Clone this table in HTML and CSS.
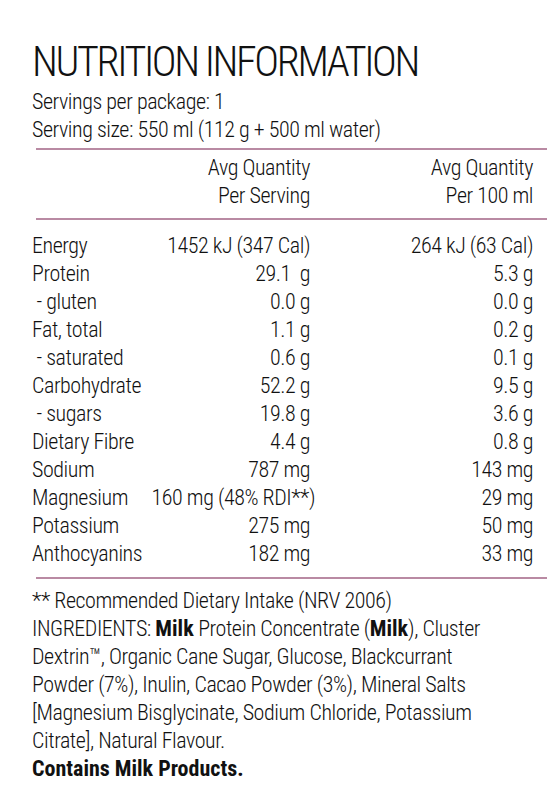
FILE: index.html
```html
<!DOCTYPE html>
<html lang="en">
<head>
    <meta charset="UTF-8">
    <meta name="viewport" content="width=device-width, initial-scale=1.0">
    <title>Nutrition Information</title>
    <link rel="stylesheet" href="styles.css">
</head>
<body>
    <div class="panel">
        <h1>NUTRITION INFORMATION</h1>
        <p class="serving">Servings per package: 1</p>
        <p class="serving">Serving size: 550 ml (112 g + 500 ml water)</p>

        <hr class="rule">

        <div class="row head">
            <span class="label"></span>
            <span class="per-serve">Avg Quantity<br>Per Serving</span>
            <span class="per-100">Avg Quantity<br>Per 100 ml</span>
        </div>

        <hr class="rule">

        <div class="facts">
            <div class="row"><span class="label">Energy</span><span class="per-serve">1452 kJ (347 Cal)</span><span class="per-100">264 kJ (63 Cal)</span></div>
            <div class="row"><span class="label">Protein</span><span class="per-serve">29.1&nbsp; g</span><span class="per-100">5.3 g</span></div>
            <div class="row"><span class="label">&nbsp;- gluten</span><span class="per-serve">0.0 g</span><span class="per-100">0.0 g</span></div>
            <div class="row"><span class="label">Fat, total</span><span class="per-serve">1.1 g</span><span class="per-100">0.2 g</span></div>
            <div class="row"><span class="label">&nbsp;- saturated</span><span class="per-serve">0.6 g</span><span class="per-100">0.1 g</span></div>
            <div class="row"><span class="label">Carbohydrate</span><span class="per-serve">52.2 g</span><span class="per-100">9.5 g</span></div>
            <div class="row"><span class="label">&nbsp;- sugars</span><span class="per-serve">19.8 g</span><span class="per-100">3.6 g</span></div>
            <div class="row"><span class="label">Dietary Fibre</span><span class="per-serve">4.4 g</span><span class="per-100">0.8 g</span></div>
            <div class="row"><span class="label">Sodium</span><span class="per-serve">787 mg</span><span class="per-100">143 mg</span></div>
            <div class="row"><span class="label">Magnesium</span><span class="per-serve overhang">160 mg (48% RDI**)</span><span class="per-100">29 mg</span></div>
            <div class="row"><span class="label">Potassium</span><span class="per-serve">275 mg</span><span class="per-100">50 mg</span></div>
            <div class="row"><span class="label">Anthocyanins</span><span class="per-serve">182 mg</span><span class="per-100">33 mg</span></div>
        </div>

        <hr class="rule">

        <div class="notes">
            <p>** Recommended Dietary Intake (NRV 2006)</p>
            <p>INGREDIENTS: <b>Milk</b> Protein Concentrate (<b>Milk</b>), Cluster<br>
            Dextrin™, Organic Cane Sugar, Glucose, Blackcurrant<br>
            Powder (7%), Inulin, Cacao Powder (3%), Mineral Salts<br>
            [Magnesium Bisglycinate, Sodium Chloride, Potassium<br>
            Citrate], Natural Flavour.</p>
            <p><b>Contains Milk Products.</b></p>
        </div>
    </div>
</body>
</html>
```

FILE: styles.css
```css
body {
    margin: 0;
    background-color: #fff;
    color: #111;
    font-family: Roboto, "Liberation Sans", Arial, sans-serif;
    font-stretch: 75%;
    font-weight: 350;
    font-size: 22px;
    line-height: 28px;
    letter-spacing: -0.45px;
}
.panel {
    padding: 36px 0 0 32px;
    width: 515px;
}
h1 {
    margin: 0;
    font-size: 42px;
    font-weight: 300;
    line-height: 52px;
    letter-spacing: -2.4px;
}
.serving {
    margin: 0;
}
.rule {
    border: none;
    border-top: 2px solid #b98aa3;
    margin: 4px 0 0 4px;
    height: 0;
}
.row {
    display: flex;
    width: 501px;
}
.head {
    margin: 4px 0 8px;
}
.label {
    flex: 1;
    white-space: pre;
}
.per-serve {
    text-align: right;
    white-space: nowrap;
}
.per-100 {
    width: 223px;
    text-align: right;
}
.overhang {
    margin-right: -5px;
}
.facts {
    margin: 12px 0 9px;
}
.notes {
    margin-top: 8px;
}
.notes p {
    margin: 0;
}
.notes b {
    font-weight: 700;
    font-stretch: 80%;
    letter-spacing: 0;
}
```
